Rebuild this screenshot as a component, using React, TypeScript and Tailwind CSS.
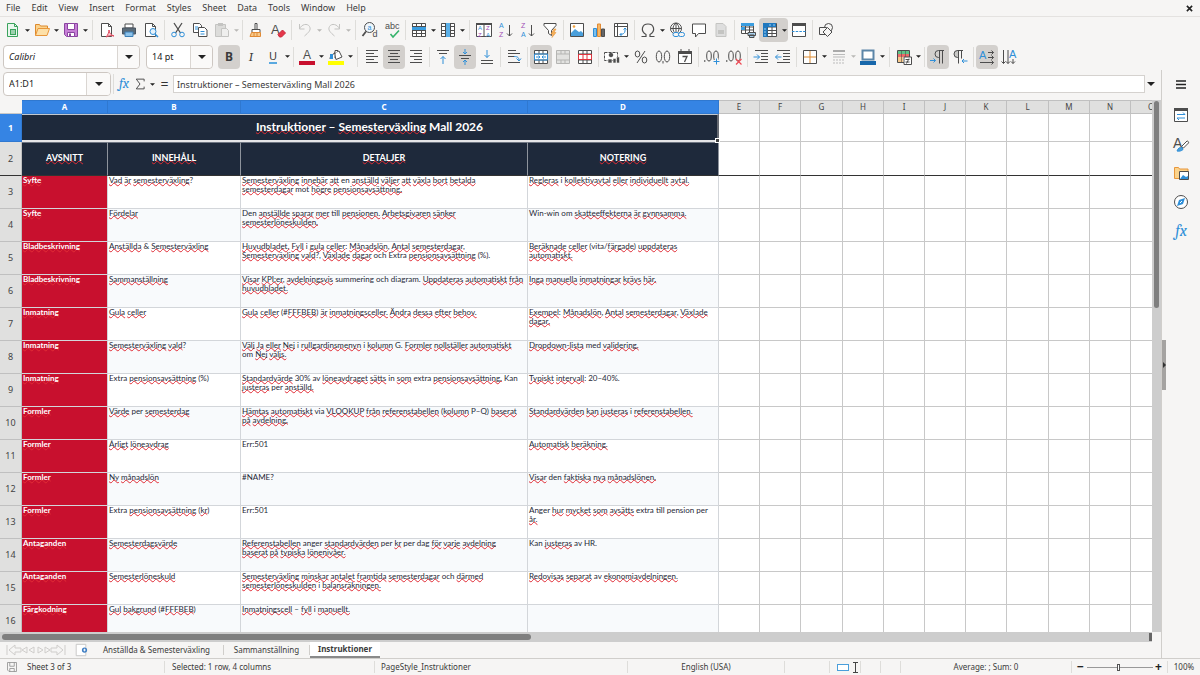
import React, { type ReactNode } from 'react'
import clsx from 'clsx'

// Shared stroke colours of the icon set
const G = '#4d4d4d'
const B = '#2f8fd8'
const L = '#c4c4c2'

const t = (x: number, y: number, size: number, fill: string, s: string) => (
  <text x={x} y={y} fontSize={size} fill={fill} stroke="none" fontFamily="'Liberation Sans', sans-serif">
    {s}
  </text>
)

const icons: Record<string, ReactNode> = {
  new: (
    <>
      <path d="M2.500 1.500h7l3 3v10h-10z" fill="#e9f7ee" stroke="#3aa35c" />
      <path d="M9.500 1.500v3h3" stroke="#3aa35c" />
      <path d="M5 7h6v6H5z" fill="#3aa35c" stroke="none" />
      <path d="M6 9h4M6 11h4" stroke="#fff" />
    </>
  ),
  open: (
    <>
      <path d="M1.500 13.500v-11h4l1 1.500h7v2.500" fill="#fbd38c" stroke="#dd8a2e" />
      <path d="M1.500 13.500l2.500-7h11.500l-2.500 7z" fill="#fde0a8" stroke="#e8963a" />
    </>
  ),
  save: (
    <>
      <path d="M1.500 1.500h13v13h-11l-2-2z" fill="#c77fd6" stroke="#8a44a0" />
      <path d="M4.500 1.500h7v6h-7z" fill="#fff" stroke="#8a44a0" />
      <path d="M4.500 10.500h7v4h-7z" fill="#fff" stroke="#8a44a0" />
      <path d="M6 11.500h2v3H6z" fill="#8a44a0" stroke="none" />
    </>
  ),
  pdf: (
    <>
      <path d="M2.500 1.500h7l3 3v10h-10z" fill="#fff" />
      <path d="M9.500 1.500v3h3" />
      <path d="M7 15c2-2 3-5 3-7 0 3 2 5 5 6-3-1-6 0-8 1z" stroke="#e0455a" fill="#fbd5da" />
    </>
  ),
  print: (
    <>
      <path d="M4 2h8v4H4z" fill="#fff" />
      <path d="M1.500 6h13v6h-13z" fill="#5a6b78" stroke="#4a5560" />
      <path d="M4 10h8v4.500H4z" fill="#8cc2ea" stroke="#3c7fb5" />
    </>
  ),
  preview: (
    <>
      <path d="M2.500 1.500h7l3 3v10h-10z" fill="#fff" />
      <path d="M9.500 1.500v3h3" />
      <circle cx="10" cy="9.500" r="3" stroke={B} fill="#e6f2fb" />
      <path d="M12 12l3 3" stroke={B} strokeWidth="1.500" />
    </>
  ),
  cut: (
    <>
      <path d="M4 1l6.500 10M12 1L5.500 11" strokeWidth="1.300" />
      <circle cx="4" cy="12.500" r="2.300" stroke={B} />
      <circle cx="12" cy="12.500" r="2.300" stroke={B} />
    </>
  ),
  copy: (
    <>
      <path d="M1.500 1.500h6l2 2v7h-8z" fill="#fff" />
      <path d="M6.500 5.500h6l2.500 2.500v6.500H6.500z" fill="#fff" />
      <path d="M3 5h3M3 7h3M8.500 9.500h4M8.500 12h4" stroke={B} />
    </>
  ),
  paste: (
    <>
      <path d="M1.500 2.500h10v12h-10z" fill="#dcdcda" stroke={L} />
      <path d="M4 1h5v3H4z" fill={L} stroke="none" />
      <path d="M7.500 6.500h5l2 2v6h-7z" fill="#efefee" stroke={L} />
    </>
  ),
  brush: (
    <>
      <path d="M7 1.500h2v6H7zM4 7.500h8v3H4z" fill="#fff" />
      <path d="M3.500 10.500h9v4h-10.500z" fill="#f8c98a" stroke="#e08a35" />
      <path d="M6 11v3M9 11v3" stroke="#e08a35" />
    </>
  ),
  clear: (
    <>
      {t(1, 12, 13, G, 'A')}
      <path d="M8 12.500l4.500-4.500 3 3-4 4H9.500z" fill="#e5364a" stroke="#c9283b" />
    </>
  ),
  undo: <path d="M2.500 2v5h5M2.500 7c2-5 8-6 10-2.500s-1 6-5 9.500" stroke={L} />,
  redo: <path d="M13.500 2v5h-5M13.500 7c-2-5-8-6-10-2.500s1 6 5 9.500" stroke={L} />,
  find: (
    <>
      <circle cx="7.500" cy="5.500" r="5" fill="#eef6fc" />
      <path d="M4 9.500L.5 14" strokeWidth="1.800" />
      {t(5.500, 8, 7, B, 'a')}
      {t(10.500, 15, 9, G, 'd')}
    </>
  ),
  spell: (
    <>
      {t(1, 7, 9, G, 'abc')}
      <path d="M6.500 12l2.500 3 6-6.500" stroke="#35b36b" strokeWidth="1.600" />
    </>
  ),
  rows: (
    <>
      <path d="M1.500 1.500h13v13h-13z" fill="#fff" />
      <path d="M1.500 4.500h13M1.500 8.500h13M1.500 11.500h13M5.500 1.500v13M10.500 1.500v13" />
      <path d="M1 5h14v3H1z" fill="#3a9de0" stroke="none" />
    </>
  ),
  cols: (
    <>
      <path d="M1.500 1.500h13v13h-13z" fill="#fff" />
      <path d="M1.500 4.500h13M1.500 8.500h13M1.500 11.500h13M5.500 1.500v13M10.500 1.500v13" />
      <path d="M6 1h4v14H6z" fill="#5bb0e8" stroke="none" />
    </>
  ),
  sort: (
    <>
      <path d="M.5 1.500h15v13H.5zM8 3v12" fill="#fff" />
      <path d="M0 1h16v2H0z" fill={G} stroke="none" />
      {t(2, 8, 6, B, 'A')}
      {t(2, 15, 6, '#a04bb5', 'Z')}
      {t(10, 8, 6, '#a04bb5', 'Z')}
      {t(10, 15, 6, B, 'A')}
    </>
  ),
  az: (
    <>
      {t(1, 6, 7, B, 'A')}
      {t(1, 15, 7, '#a04bb5', 'Z')}
      <path d="M11.500 3v11M9 11.500l2.500 2.500 2.500-2.500" />
    </>
  ),
  za: (
    <>
      {t(1, 6, 7, '#a04bb5', 'Z')}
      {t(1, 15, 7, B, 'A')}
      <path d="M11.500 3v11M9 11.500l2.500 2.500 2.500-2.500" />
    </>
  ),
  filter: (
    <>
      <path d="M2 1.500h12v2l-4.500 5v5l-3-2v-3L2 3.500z" fill="#fff" />
      <path d="M12 7l-3 5h2l-1 3.500 4-5h-2l2-3.500z" fill="#f5b25c" stroke="#e8963a" strokeWidth=".6" />
    </>
  ),
  image: (
    <>
      <path d="M1.500 1.500h13v13h-13z" fill="#fff" />
      <path d="M2 14v-3l4-4 4 3 2-1 2 2v3z" fill="#4a9fdb" stroke="none" />
      <circle cx="5" cy="4.500" r="1.300" fill="#f3a23c" stroke="none" />
    </>
  ),
  chart: (
    <>
      <path d="M2.500 6.500h3v8h-3z" fill="#7cc0ee" stroke={B} />
      <path d="M6.500 2h3v12.500h-3z" fill="#f8b765" stroke="#e08a35" />
      <path d="M10.500 7h3v7.500h-3z" fill="#666" />
    </>
  ),
  pivot: (
    <>
      <path d="M1.500 1.500h13v13h-13zM1.500 4.500h13M4.500 1.500v13" fill="#fff" />
      <path d="M12 6v3c0 2-2 3.500-5 3.500M10.500 7.500L12 6l1.500 1.500M8.500 11L7 12.500 8.500 14" stroke={B} />
    </>
  ),
  omega: <path d="M1.500 14.500h4.500v-2C0 9 2 2 8 2s8 7 2 10.500v2h4.500" strokeWidth="1.200" />,
  link: (
    <>
      <circle cx="7" cy="6.500" r="5.500" fill="#fff" />
      <path d="M7 1v11M1.500 6.500h11M7 1c-4 3-4 8 0 11M7 1c4 3 4 8 0 11" />
      <rect x="4" y="10.500" width="6" height="4" rx="2" fill="#f6f5f4" stroke={B} />
      <rect x="9.500" y="10.500" width="6" height="4" rx="2" fill="#f6f5f4" stroke={B} />
    </>
  ),
  comment: <path d="M1.500 2h13v9.500H7.500L4.500 15v-3.500h-3z" fill="#fff" />,
  page: (
    <>
      <path d="M3 1.500h7l3 3v10H3z" fill="#dedede" stroke={L} />
      <path d="M5 8h6v4H5z" fill={L} stroke="none" />
    </>
  ),
  printArea: (
    <>
      <path d="M1.500 1.500h12v10h-12zM1.500 5h12M1.500 8h12M5.500 1.500v10M9.500 1.500v10" fill="#fff" />
      <path d="M1 1h13v3H1zM1 5h4v3H1z" fill="#3a9de0" stroke="none" />
      <path d="M8 10.500h7.500v3H8zM9.500 13h4.500v2.500H9.500z" fill="#a8cfec" />
    </>
  ),
  freeze: (
    <>
      <path d="M1.500 1.500h13v13h-13zM5.500 1.500v13M10 5v10M1.500 5h13M5 8.500h10M5 11.500h10" fill="#fff" />
      <path d="M1 1h13v4H5.500v10H1z" fill="#1f78bf" stroke="none" />
      <path d="M2 7h2M2 10h2M2 13h2M7 3h2M11 3h2" stroke="#9fd0f2" />
    </>
  ),
  split: (
    <>
      <path d="M1.500 1.500h13v13h-13z" fill="#fff" />
      <path d="M1 1h14v3H1z" fill={G} stroke="none" />
      <path d="M1 9.500h14" stroke={B} strokeDasharray="2.500 1.200" />
    </>
  ),
  shapes: (
    <>
      <circle cx="10.500" cy="5.500" r="4" />
      <path d="M1.500 5.500h7v7h-7z" fill="#f6f5f4" />
      <path d="M9.500 5.500l4.500 4.500-4.500 4.500L5 10z" fill="#f6f5f4" />
    </>
  ),
  fontColor: (
    <>
      {t(4, 10, 12, G, 'A')}
      <path d="M0 12h16v4H0z" fill="#c8102e" stroke="none" />
    </>
  ),
  fill: (
    <>
      <path d="M6 4l5-2 3 6-6 2.500z" fill="#fff" />
      <path d="M7 5V1.500h3M2 10c0-3 2-5 5-5.500L7 9" fill="#fff" />
      <path d="M2 5h3v5H2z" fill={B} stroke="none" />
      <path d="M0 12h16v4H0z" fill="#ffff00" stroke="none" />
    </>
  ),
  left: <path d="M2 1.500h12M2 4.500h8M2 7.500h12M2 10.500h8M2 13.500h12" />,
  center: <path d="M2 1.500h12M4 4.500h8M2 7.500h12M4 10.500h8M2 13.500h12" />,
  right: <path d="M2 1.500h12M6 4.500h8M2 7.500h12M6 10.500h8M2 13.500h12" />,
  top: (
    <>
      <path d="M2 1.500h12M4 4.500h8" />
      <path d="M8 15V7.500M5.500 10L8 7.500l2.500 2.500" stroke={B} />
    </>
  ),
  middle: (
    <>
      <path d="M2 6.500h12M4 9.500h8" />
      <path d="M8 0v5M6 3l2 2 2-2M8 16v-5M6 13l2-2 2 2" stroke={B} />
    </>
  ),
  bottom: (
    <>
      <path d="M2 11.500h12M2 14.500h12" />
      <path d="M8 1v7.500M5.500 6L8 8.500 10.500 6" stroke={B} />
    </>
  ),
  wrap: (
    <>
      <path d="M2 1.500h8M2 4.500h12M2 7.500h6M2 13.500h12" />
      <path d="M8 7.500c4 0 5 1 5 4.500M10.500 9.500L13 12l2-2.500" stroke={B} />
    </>
  ),
  mergeCenter: (
    <>
      <path d="M1.500 1.500h13v13h-13zM1.500 5h13M1.500 11h13M6 1.500V5M10 1.500V5M6 11v3.500M10 11v3.500" fill="#fff" />
      <path d="M1.500 5h13v6h-13zM3 8h4M13 8H9M5.500 6.500L7 8 5.500 9.500M10.500 6.500L9 8l1.500 1.500" stroke={B} />
    </>
  ),
  merge: (
    <path
      d="M1.500 1.500h13v13h-13zM1.500 5h13M1.500 11h13M6 1.500V5M10 1.500V5M6 11v3.500M10 11v3.500"
      fill="#e2e2e0"
      stroke="#b5b5b3"
    />
  ),
  unmerge: (
    <>
      <path d="M1.500 1.500h13v13h-13zM1.500 5h13M1.500 11h13M6 1.500V5M10 1.500V5M6 11v3.500M10 11v3.500" fill="#fff" />
      <path d="M1.500 5.500h13v5h-13zM6 5.500v5M10 5.500v5" stroke="#e0343f" />
    </>
  ),
  currency: (
    <>
      <path d="M.5 3.500h13v8H.5z" fill="#fff" strokeDasharray="3 1" />
      <circle cx="7" cy="6" r="1.800" fill={G} />
      <path d="M4 10h4v4H4zM9 9.500h3v4.500H9zM12.500 8h3v6h-3z" fill={G} stroke="#f6f5f4" strokeWidth=".6" />
    </>
  ),
  percent: (
    <>
      <ellipse cx="4.500" cy="5" rx="2.300" ry="3" />
      <ellipse cx="11.500" cy="11" rx="2.300" ry="3" />
      <path d="M12 2L4 14" />
    </>
  ),
  number: (
    <>
      <ellipse cx="4" cy="7.500" rx="2.700" ry="5.500" />
      <ellipse cx="12" cy="7.500" rx="2.700" ry="5.500" />
      <path d="M8 12v2.500" />
    </>
  ),
  date: (
    <>
      <path d="M1.500 2.500h13v12h-13z" fill="#fff" />
      <path d="M1.500 2.500h13v2h-13zM4 0v3M12 0v3" fill={G} />
      <path d="M5.500 7.500H10L7.500 13" strokeWidth="1.300" />
    </>
  ),
  addDecimal: (
    <>
      <ellipse cx="5" cy="7" rx="2.300" ry="5" />
      <ellipse cx="12" cy="7" rx="2.300" ry="5" />
      <path d="M.8 11v2" />
      <path d="M12.500 9v7M9 12.500h7" stroke="#f6f5f4" strokeWidth="3" />
      <path d="M12.500 9.500v6M9.500 12.500h6" stroke={B} />
    </>
  ),
  delDecimal: (
    <>
      <ellipse cx="5" cy="7" rx="2.300" ry="5" />
      <ellipse cx="12" cy="7" rx="2.300" ry="5" />
      <path d="M.8 11v2" />
      <path d="M10 10l5.500 5.500M15.500 10L10 15.500" stroke="#ee4a55" strokeWidth="1.200" />
    </>
  ),
  indent: (
    <>
      <path d="M2 1.500h13M8 4.500h7M8 7.500h7M8 10.500h7M2 13.500h13" />
      <path d="M.5 8h6M4 5.500L6.500 8 4 10.500" stroke={B} />
    </>
  ),
  outdent: (
    <>
      <path d="M2 1.500h13M8 4.500h7M8 7.500h7M8 10.500h7M2 13.500h13" />
      <path d="M6.500 8h-6M3 5.500L.5 8 3 10.500" stroke={B} />
    </>
  ),
  borders: (
    <>
      <path d="M1.500 1.500h13v13h-13z" fill="#fff" />
      <path d="M8 2v12M2 8h12" stroke="#dd8a2e" />
    </>
  ),
  lineStyle: (
    <>
      <path d="M2 2h12" stroke="#aaa" strokeWidth="2" />
      <path d="M2 5.500h12M2 8h12" stroke="#bbb" />
      <path d="M2 11h12M2 14h12" stroke="#bbb" strokeDasharray="2 1" />
    </>
  ),
  lineColor: (
    <>
      <path d="M2.500 1.500h11v9h-11z" fill="#fff" stroke="#5c86a8" strokeWidth="2" />
      <path d="M0 12h16v4H0z" fill="#1767ab" stroke="none" />
    </>
  ),
  conditional: (
    <>
      <path d="M1.500 1.500h12v12h-12z" fill="#fff" />
      <path d="M2 2h11v3H2z" fill="#5fc487" stroke="none" />
      <path d="M2 5h11v3H2z" fill="#ee6a6a" stroke="none" />
      <path d="M2 8h5v5H2z" fill="#f8c98a" stroke="none" />
      <path d="M5.500 1.500v12M9.500 1.500V8" strokeWidth=".6" />
      <path d="M8 8h7.500v7.500H8zM9.500 10.500h4M9.500 13h4M13 9.500l-2.500 5" fill="#fff" />
    </>
  ),
  ltr: (
    <>
      <path d="M14 1.500H8.500a3.500 3.500 0 000 7h1M9.500 1.500v13M12.500 1.500v13" />
      <path d="M0 11.500h5.500M3.500 9.500l2 2-2 2" stroke={B} />
    </>
  ),
  rtl: (
    <>
      <path d="M6.500 1.500h-1a3.500 3.500 0 000 7h1z" fill="#c9c9c7" />
      <path d="M11 1.500H5.500M6.500 1.500v13M9.500 1.500v8" />
      <path d="M15.500 12H10M12 10l-2 2 2 2" stroke={B} />
    </>
  ),
  dirH: (
    <>
      {t(0, 10, 11, B, 'A')}
      <path d="M9 3.500h5.500M9 8.500h5.500M1 13.500h13.500M12.500 1.500l2 2-2 2M12.500 6.500l2 2-2 2M12.500 11.500l2 2-2 2" />
    </>
  ),
  dirV: (
    <>
      {t(8, 9, 11, B, 'A')}
      <path d="M2.500 1v13.500M7 1v13.500M12 10v4.500M.5 12.500l2 2 2-2M5 12.500l2 2 2-2M10 12.500l2 2 2-2" />
    </>
  ),
  sum: <path d="M13.500 4.500v-3H3l5 6.500-5 6.500h10.500v-3" strokeWidth="1.300" />,
  properties: (
    <>
      <path d="M1.500 1.500h13v13h-13z" fill="#fff" />
      <path d="M1 1h14v3H1z" fill={G} stroke="none" />
      <path d="M4 7.500h8M10 5.500l2 2M4 11h8M4 11l2 2" stroke={B} />
    </>
  ),
  styles: (
    <>
      {t(0, 12, 14, G, 'A')}
      <path d="M8.500 10.500l5.500-5.500c1 0 2 1 1.500 2l-5 5z" fill="#fff" />
      <path d="M4 15c1-3 3-4 5-3.500l1 2C8.500 15 6 15.500 4 15z" fill="#4a9fdb" stroke={B} />
    </>
  ),
  gallery: (
    <>
      <path d="M1.500 13.500v-11h4l1 1.500h8.500v9.500z" fill="#fbd38c" stroke="#e8963a" />
      <path d="M6.500 6.500h9v8h-9z" fill="#fff" />
      <path d="M7 14l3-4 3 2 2-1v3z" fill={B} stroke="none" />
    </>
  ),
  navigator: (
    <>
      <circle cx="8" cy="8" r="6.500" fill="#fff" />
      <path d="M12 4l-2 6-6 2 2-6z" fill={B} stroke="none" />
      <path d="M9 7L7 9" stroke="#fff" />
    </>
  ),
  disk: <path d="M2 2h12v12H4l-2-2zM5 2v5h6V2M5 14v-4h6v4" stroke="#888" />,
  addSheet: (
    <>
      <path d="M2.500 1.500h11v13h-11z" fill="#fff" stroke={L} />
      <circle cx="12" cy="8" r="3" fill="#3f7fc4" stroke="none" />
      <path d="M12 6.500v3M10.500 8h3" stroke="#fff" />
    </>
  ),
}

function Icon({ name, className = 'size-4' }: { name: string; className?: string }) {
  return (
    <svg viewBox="0 0 16 16" fill="none" stroke={G} className={clsx('shrink-0 overflow-visible', className)} aria-hidden="true">
      {icons[name]}
    </svg>
  )
}

function Caret({ disabled = false, large = false }: { disabled?: boolean; large?: boolean }) {
  return (
    <svg
      viewBox="0 0 8 4"
      aria-hidden="true"
      className={clsx('shrink-0', large ? 'h-1 w-2' : 'h-[3px] w-[5px]', disabled ? 'fill-[#b9b8b6]' : 'fill-[#222]')}
    >
      <path d="M0 0h8L4 4z" />
    </svg>
  )
}

interface ToolProps {
  name: string
  label: string
  menu?: boolean
  active?: boolean
  disabled?: boolean
  children?: ReactNode
}

function Tool({ name, label, menu, active, disabled, children }: ToolProps) {
  return (
    <div className={clsx('flex shrink-0 rounded-sm', active && 'bg-[#d3d0cd]')}>
      <button aria-label={label} disabled={disabled} className="flex h-6 w-[22px] items-center justify-center">
        {children ?? <Icon name={name} />}
      </button>
      {menu && (
        <button aria-label={`${label} options`} disabled={disabled} className="flex h-6 w-[7px] items-center justify-center">
          <Caret disabled={disabled} />
        </button>
      )}
    </div>
  )
}

function Sep({ wide = false }: { wide?: boolean }) {
  return (
    <div className={clsx('flex h-6 shrink-0 items-center justify-center', wide ? 'w-[7px]' : 'w-[5px]')}>
      <div className="h-5 w-px bg-[#deddda]" />
    </div>
  )
}

function Combo({ label, value, className }: { label: string; value: string; className: string }) {
  return (
    <div className={clsx('relative h-6 shrink-0', className)}>
      <select
        aria-label={label}
        defaultValue={value}
        className={clsx(
          'size-full appearance-none rounded-sm border border-[#cdc7c2] bg-white pl-[5px] text-[9px] text-[#222]',
          label === 'Font name' && 'italic',
        )}
      >
        <option>{value}</option>
      </select>
      <span className="pointer-events-none absolute inset-y-px right-px flex w-[22px] items-center justify-center rounded-r-sm border-l border-[#dad6d2] bg-[#faf9f8]">
        <Caret large />
      </span>
    </div>
  )
}

const menus = ['File', 'Edit', 'View', 'Insert', 'Format', 'Styles', 'Sheet', 'Data', 'Tools', 'Window', 'Help']

function MenuBar() {
  return (
    <nav className="flex h-[17px] shrink-0 items-center justify-between border-b border-[#e4e2e0] pr-[7px] pl-[6px]">
      <div className="flex gap-[11px]">
        {menus.map((m) => (
          <button key={m}>{m}</button>
        ))}
      </div>
      <button aria-label="Close document">
        <svg viewBox="0 0 8 8" className="size-[7px]" stroke="#222" strokeWidth="1.800" aria-hidden="true">
          <path d="M1 1l6 6M7 1L1 7" />
        </svg>
      </button>
    </nav>
  )
}

function StandardBar() {
  return (
    <div role="toolbar" aria-label="Standard" className="flex h-[26px] shrink-0 items-center pl-[2px]">
      <Tool name="new" label="New" menu />
      <Tool name="open" label="Open" menu />
      <Tool name="save" label="Save" menu />
      <Sep wide />
      <Tool name="pdf" label="Export as PDF" />
      <Tool name="print" label="Print" />
      <Tool name="preview" label="Print preview" />
      <Sep />
      <Tool name="cut" label="Cut" />
      <Tool name="copy" label="Copy" />
      <Tool name="paste" label="Paste" menu disabled />
      <Sep />
      <Tool name="brush" label="Clone formatting" />
      <Tool name="clear" label="Clear formatting" />
      <Sep />
      <Tool name="undo" label="Undo" menu disabled />
      <Tool name="redo" label="Redo" menu disabled />
      <Sep wide />
      <Tool name="find" label="Find and replace" />
      <Tool name="spell" label="Spelling" />
      <Sep />
      <Tool name="rows" label="Row" menu />
      <Tool name="cols" label="Column" menu />
      <Sep wide />
      <Tool name="sort" label="Sort" />
      <Tool name="az" label="Sort ascending" />
      <Tool name="za" label="Sort descending" />
      <Tool name="filter" label="AutoFilter" />
      <Sep />
      <Tool name="image" label="Insert image" />
      <Tool name="chart" label="Insert chart" />
      <Tool name="pivot" label="Insert pivot table" />
      <Sep />
      <Tool name="omega" label="Special character" menu />
      <Tool name="link" label="Insert hyperlink" />
      <Tool name="comment" label="Insert comment" />
      <Tool name="page" label="Headers and footers" disabled />
      <Sep />
      <Tool name="printArea" label="Define print area" />
      <Tool name="freeze" label="Freeze rows and columns" menu active />
      <Tool name="split" label="Split window" />
      <Sep />
      <Tool name="shapes" label="Show draw functions" />
    </div>
  )
}

function FormattingBar() {
  return (
    <div role="toolbar" aria-label="Formatting" className="flex h-[27px] shrink-0 items-center pl-[3px]">
      <Combo label="Font name" value="Calibri" className="mr-1.5 w-[137px]" />
      <Combo label="Font size" value="14 pt" className="mr-[5px] w-[67px]" />
      <Tool name="bold" label="Bold" active>
        <span className="text-[12px] font-bold">B</span>
      </Tool>
      <Tool name="italic" label="Italic">
        <span className="font-serif text-[13px] italic">I</span>
      </Tool>
      <Tool name="underline" label="Underline" menu>
        <span className="border-b-2 border-[#5aa9e0] text-[11px] leading-[12px]">U</span>
      </Tool>
      <Sep />
      <Tool name="fontColor" label="Font colour" menu />
      <Tool name="fill" label="Background colour" menu />
      <Sep wide />
      <Tool name="left" label="Align left" />
      <Tool name="center" label="Align centre" active />
      <Tool name="right" label="Align right" />
      <Sep />
      <Tool name="top" label="Align top" />
      <Tool name="middle" label="Centre vertically" active />
      <Tool name="bottom" label="Align bottom" />
      <Sep />
      <Tool name="wrap" label="Wrap text" />
      <Sep />
      <Tool name="mergeCenter" label="Merge and centre" active />
      <Tool name="merge" label="Merge cells" disabled />
      <Tool name="unmerge" label="Unmerge cells" />
      <Sep />
      <Tool name="currency" label="Format as currency" menu />
      <Tool name="percent" label="Format as percent" />
      <Tool name="number" label="Format as number" />
      <Tool name="date" label="Format as date" />
      <Sep />
      <Tool name="addDecimal" label="Add decimal place" />
      <Tool name="delDecimal" label="Delete decimal place" />
      <Sep />
      <Tool name="indent" label="Increase indent" />
      <Tool name="outdent" label="Decrease indent" />
      <Sep />
      <Tool name="borders" label="Borders" menu />
      <Tool name="lineStyle" label="Border style" menu disabled />
      <Tool name="lineColor" label="Border colour" menu />
      <Sep wide />
      <Tool name="conditional" label="Conditional formatting" menu />
      <Sep />
      <Tool name="ltr" label="Left to right" active />
      <Tool name="rtl" label="Right to left" />
      <Sep />
      <Tool name="dirH" label="Horizontal text" active />
      <Tool name="dirV" label="Vertical text" />
    </div>
  )
}

function FormulaBar() {
  return (
    <div className="flex h-[30px] shrink-0 items-center pr-1 pb-0.5 pl-[3px]">
      <div className="flex h-6 w-[108px] shrink-0 overflow-hidden rounded-sm border border-[#cdc7c2] bg-white">
        <input aria-label="Name box" defaultValue="A1:D1" className="min-w-0 flex-1 pl-[5px] text-[9px] text-[#222]" />
        <button aria-label="Manage names" className="flex w-6 items-center justify-center border-l border-[#dad6d2] bg-[#faf9f8]">
          <Caret large />
        </button>
      </div>
      <div className="ml-0.5 flex items-center border-l border-[#deddda] pl-0.5">
        <button aria-label="Function wizard" className="w-4 font-serif text-[14px] leading-4 text-[#2f8fd8] italic">
          fx
        </button>
        <button aria-label="Select function" className="flex h-5 w-4 items-center justify-center">
          <Icon name="sum" className="size-3" />
        </button>
        <span className="flex w-2 justify-center">
          <Caret />
        </span>
        <button aria-label="Formula" className="w-[17px] text-[14px] leading-4 text-[#333]">
          =
        </button>
      </div>
      <input
        aria-label="Input line"
        defaultValue="Instruktioner – Semesterväxling Mall 2026"
        className="h-[18px] min-w-0 flex-1 border border-[#d5d2cf] bg-white pl-[3px] text-[9px] text-[#3a3a3a]"
      />
      <button aria-label="Expand formula bar" className="flex h-5 w-3 items-center justify-center">
        <Caret large />
      </button>
    </div>
  )
}

// Words the spelling dictionary accepts; everything else gets the red wave.
const knownWords = new Set(
  'mot en till i och Den den summering diagram med om G Kan in extra Extra av per P Q via HR anger Anger pension dag vita Win-win Mall Err NAME'.split(
    ' ',
  ),
)

function Spelled({ text }: { text: string }) {
  const tokens = text.match(/\p{L}+(?:[:-]\p{L}+)*\.?|[^\p{L}]+/gu) ?? []
  return (
    <>
      {tokens.map((token, i) => {
        const ok = !/^\p{L}/u.test(token) || knownWords.has(token.replace('.', ''))
        return ok ? (
          token
        ) : (
          <span
            key={i}
            className="underline decoration-[#e02b35] decoration-wavy decoration-1 underline-offset-[-1px] [text-decoration-skip-ink:none]"
          >
            {token}
          </span>
        )
      })}
    </>
  )
}

const columns = [
  { id: 'A', width: 'w-[86px]' },
  { id: 'B', width: 'w-[133px]' },
  { id: 'C', width: 'w-[287px]' },
  { id: 'D', width: 'w-[191px]' },
  { id: 'E', width: 'w-[41px]' },
  { id: 'F', width: 'w-[41px]' },
  { id: 'G', width: 'w-[42px]' },
  { id: 'H', width: 'w-[41px]' },
  { id: 'I', width: 'w-[41px]' },
  { id: 'J', width: 'w-[41px]' },
  { id: 'K', width: 'w-[41px]' },
  { id: 'L', width: 'w-[42px]' },
  { id: 'M', width: 'w-[41px]' },
  { id: 'N', width: 'w-[41px]' },
  { id: 'O', width: 'w-[41px]' },
]
const emptyColumns = columns.slice(4)

const headings = ['AVSNITT', 'INNEHÅLL', 'DETALJER', 'NOTERING']

const rows = [
  ['Syfte', 'Vad är semesterväxling?', 'Semesterväxling innebär att en anställd väljer att växla bort betalda\nsemesterdagar mot högre pensionsavsättning.', 'Regleras i kollektivavtal eller individuellt avtal.'],
  ['Syfte', 'Fördelar', 'Den anställde sparar mer till pensionen. Arbetsgivaren sänker\nsemesterlöneskulden.', 'Win-win om skatteeffekterna är gynnsamma.'],
  ['Bladbeskrivning', 'Anställda & Semesterväxling', 'Huvudbladet. Fyll i gula celler: Månadslön, Antal semesterdagar,\nSemesterväxling vald?, Växlade dagar och Extra pensionsavsättning (%).', 'Beräknade celler (vita/färgade) uppdateras\nautomatiskt.'],
  ['Bladbeskrivning', 'Sammanställning', 'Visar KPI:er, avdelningsvis summering och diagram. Uppdateras automatiskt från\nhuvudbladet.', 'Inga manuella inmatningar krävs här.'],
  ['Inmatning', 'Gula celler', 'Gula celler (#FFFBEB) är inmatningsceller. Ändra dessa efter behov.', 'Exempel: Månadslön, Antal semesterdagar, Växlade\ndagar.'],
  ['Inmatning', 'Semesterväxling vald?', 'Välj Ja eller Nej i rullgardinsmenyn i kolumn G. Formler nollställer automatiskt\nom Nej väljs.', 'Dropdown-lista med validering.'],
  ['Inmatning', 'Extra pensionsavsättning (%)', 'Standardvärde 30% av löneavdraget sätts in som extra pensionsavsättning. Kan\njusteras per anställd.', 'Typiskt intervall: 20–40%.'],
  ['Formler', 'Värde per semesterdag', 'Hämtas automatiskt via VLOOKUP från referenstabellen (kolumn P–Q) baserat\npå avdelning.', 'Standardvärden kan justeras i referenstabellen.'],
  ['Formler', 'Årligt löneavdrag', 'Err:501', 'Automatisk beräkning.'],
  ['Formler', 'Ny månadslön', '#NAME?', 'Visar den faktiska nya månadslönen.'],
  ['Formler', 'Extra pensionsavsättning (kr)', 'Err:501', 'Anger hur mycket som avsätts extra till pension per\når.'],
  ['Antaganden', 'Semesterdagsvärde', 'Referenstabellen anger standardvärden per kr per dag för varje avdelning\nbaserat på typiska lönenivåer.', 'Kan justeras av HR.'],
  ['Antaganden', 'Semesterlöneskuld', 'Semesterväxling minskar antalet framtida semesterdagar och därmed\nsemesterlöneskulden i balansräkningen.', 'Redovisas separat av ekonomiavdelningen.'],
  ['Färgkodning', 'Gul bakgrund (#FFFBEB)', 'Inmatningscell – fyll i manuellt.', ''],
]

function Sheet() {
  return (
    <div className="min-h-0 min-w-0 flex-1 overflow-hidden bg-white">
      <table className="w-[1172px] table-fixed border-separate border-spacing-0">
        <colgroup>
          <col className="w-[22px]" />
          {columns.map((c) => (
            <col key={c.id} className={c.width} />
          ))}
        </colgroup>
        <thead>
          <tr className="h-3.5 text-[8px] leading-[12px]">
            <td className="border-b border-[#c8c8c8] bg-[#f6f5f4]" />
            {columns.map((c, i) => (
              <th
                key={c.id}
                scope="col"
                className={clsx(
                  'border-t border-r border-b',
                  i < 4
                    ? 'border-[#2f78d0] bg-[#3584e4] font-bold text-white'
                    : 'border-[#c0c0c0] bg-[#e0e0df] font-normal text-[#444]',
                )}
              >
                {c.id}
              </th>
            ))}
          </tr>
        </thead>
        <tbody className="font-['Lato',sans-serif] text-[#1f2937]">
          <tr className="h-7">
            <RowNumber n={1} active />
            <td
              colSpan={4}
              className="relative border-t border-r-2 border-b-2 border-t-[#c3c8cf] border-r-[#666a72] border-b-[#e6e6e8] bg-[#1e293b] pb-0.5 text-center text-[12px] leading-[12px] font-bold text-white"
            >
              <Spelled text="Instruktioner – Semesterväxling Mall 2026" />
              <span className="absolute -right-[3px] -bottom-[3px] size-[5px] border border-white bg-[#444]" />
            </td>
            {emptyColumns.map((c) => (
              <td key={c.id} className="border-r border-b border-[#c8c8c8]" />
            ))}
          </tr>
          <tr className="h-[34px]">
            <RowNumber n={2} frozen />
            {headings.map((h) => (
              <th
                key={h}
                scope="col"
                className="border-t border-r border-b border-t-[#6f7683] border-r-[#8e939c] border-b-[#333] bg-[#1e293b] pb-0.5 text-[9px] leading-[12px] font-bold text-white"
              >
                <Spelled text={h} />
              </th>
            ))}
            {emptyColumns.map((c) => (
              <td key={c.id} className="border-r border-b border-r-[#c8c8c8] border-b-[#333]" />
            ))}
          </tr>
          {rows.map((cells, r) => (
            <tr key={r} className="h-[33px] text-[8px] leading-[9px]">
              <RowNumber n={r + 3} />
              {cells.map((text, i) => (
                <td
                  key={i}
                  className={clsx(
                    'overflow-hidden border-r border-b border-[#d3d6da] pl-px align-top whitespace-pre',
                    i === 0 ? 'bg-[#c8102e] font-bold text-white' : r % 2 === 1 && 'bg-[#f8fafc]',
                  )}
                >
                  <Spelled text={text} />
                </td>
              ))}
              {emptyColumns.map((c) => (
                <td key={c.id} className="border-r border-b border-[#c8c8c8]" />
              ))}
            </tr>
          ))}
        </tbody>
      </table>
    </div>
  )
}

function RowNumber({ n, active = false, frozen = false }: { n: number; active?: boolean; frozen?: boolean }) {
  return (
    <th
      scope="row"
      className={clsx(
        "border-r border-b font-['Noto_Sans',sans-serif] text-[9px] leading-[12px]",
        active ? 'border-[#2f78d0] bg-[#3584e4] font-bold text-white' : 'bg-[#e0e0df] font-normal text-[#444]',
        !active && (frozen ? 'border-r-[#c0c0c0] border-b-[#333]' : 'border-[#c0c0c0]'),
      )}
    >
      {n}
    </th>
  )
}

function SheetTabs() {
  return (
    <div className="flex h-4 shrink-0 items-center pl-1.5">
      <svg viewBox="0 0 60 12" className="h-3 w-[60px]" fill="none" stroke="#cfcdcb" aria-hidden="true">
        <path d="M1 1v10M9 1L3 6l6 5V8h6V4H9zM21 3l-5 3 5 3zM28 3l-5 3 5 3zM32 3l5 3-5 3zM39 3l5 3-5 3zM51 1l6 5-6 5V8h-6V4h6zM59 1v10" />
      </svg>
      <button aria-label="Add sheet" className="ml-2 flex size-4 items-center">
        <Icon name="addSheet" className="size-3.5" />
      </button>
      <div role="tablist" className="flex h-full items-center text-[8px]">
        <button role="tab" aria-selected="false" className="w-[133px] text-center">
          Anställda & Semesterväxling
        </button>
        <button role="tab" aria-selected="false" className="w-[87px] border-x border-[#d0cecb] text-center leading-[10px]">
          Sammanställning
        </button>
        <button role="tab" aria-selected="true" className="h-full w-[70px] border-b-2 border-[#8a8a8a] bg-white text-center font-bold">
          Instruktioner
        </button>
      </div>
    </div>
  )
}

function Sidebar() {
  const decks = [
    { name: 'properties', label: 'Properties' },
    { name: 'styles', label: 'Styles' },
    { name: 'gallery', label: 'Gallery' },
    { name: 'navigator', label: 'Navigator' },
  ]
  return (
    <aside className="relative flex w-[39px] shrink-0 flex-col items-center border-l border-[#d0cecb] pt-0.5">
      <button aria-label="Sidebar settings" className="mb-1 flex h-6 w-6 items-center justify-center">
        <svg viewBox="0 0 10 9" className="h-[9px] w-[10px]" stroke="#222" strokeWidth="1.500" aria-hidden="true">
          <path d="M0 1h10M0 4.500h10M0 8h10" />
        </svg>
      </button>
      {decks.map((d) => (
        <button key={d.name} aria-label={d.label} className="flex h-[29px] w-6 items-center justify-center">
          <Icon name={d.name} className="size-4" />
        </button>
      ))}
      <button aria-label="Functions" className="flex h-[29px] w-6 items-center justify-center font-serif text-[16px] text-[#2f8fd8] italic">
        fx
      </button>
      <button aria-label="Hide sidebar" className="absolute top-[46%] left-0 flex h-[50px] w-1 items-center justify-center bg-[#a5a3a1]">
        <svg viewBox="0 0 3 6" className="h-1.5 w-[3px]" aria-hidden="true">
          <path d="M0 0l3 3-3 3z" fill="#333" />
        </svg>
      </button>
    </aside>
  )
}

function StatusBar() {
  return (
    <footer className="flex h-[17px] shrink-0 items-center border-t border-[#d0cecb] text-[8px] leading-[12px] [&>*]:shrink-0">
      <span className="flex w-5 justify-end pr-0.5">
        <Icon name="disk" className="size-3" />
      </span>
      <span className="w-[145px] border-r border-[#deddda] pl-[7px]">Sheet 3 of 3</span>
      <span className="w-[210px] border-r border-[#deddda] pl-[7px]">Selected: 1 row, 4 columns</span>
      <span className="w-[253px] border-r border-[#deddda] pl-1.5">PageStyle_Instruktioner</span>
      <span className="w-[157px] border-r border-[#deddda] text-center">English (USA)</span>
      <span className="h-3 w-[45px] border-r border-[#deddda]" />
      <span className="flex h-3 w-[31px] items-center gap-1 border-r border-[#deddda] pl-[7px]">
        <span className="h-[7px] w-3 border border-[#4a9fdb] bg-white" />
        <svg viewBox="0 0 5 11" className="h-[11px] w-[5px]" stroke="#444" fill="none" aria-hidden="true">
          <path d="M0 .5h5M0 10.500h5M2.500 0v11" />
        </svg>
      </span>
      <span className="h-3 w-5 border-r border-[#deddda]" />
      <span className="h-3 w-5 border-r border-[#deddda]" />
      <span className="min-w-[120px] flex-1 border-r border-[#deddda] text-center">Average: ; Sum: 0</span>
      <div className="flex h-3 w-[96px] items-center justify-between border-r border-[#deddda] px-[5px]">
        <button aria-label="Zoom out" className="text-[12px] font-bold text-[#222]">
          −
        </button>
        <input
          type="range"
          aria-label="Zoom"
          min={0}
          max={100}
          defaultValue={48}
          className="h-2 w-[66px] appearance-none bg-transparent [&::-webkit-slider-runnable-track]:h-px [&::-webkit-slider-runnable-track]:bg-[#999] [&::-webkit-slider-thumb]:-mt-[3px] [&::-webkit-slider-thumb]:h-[7px] [&::-webkit-slider-thumb]:w-[3px] [&::-webkit-slider-thumb]:appearance-none [&::-webkit-slider-thumb]:border [&::-webkit-slider-thumb]:border-[#555] [&::-webkit-slider-thumb]:bg-white"
        />
        <button aria-label="Zoom in" className="text-[12px] font-bold text-[#222]">
          +
        </button>
      </div>
      <span className="w-8 text-center">100%</span>
    </footer>
  )
}

export default function App() {
  return (
    <div className="flex h-screen flex-col overflow-hidden bg-[#f6f5f4] font-['Noto_Sans',sans-serif] text-[9px] leading-[14px] text-[#3a3a3a]">
      <MenuBar />
      <StandardBar />
      <FormattingBar />
      <div className="flex min-h-0 flex-1">
        <main className="flex min-w-0 flex-1 flex-col">
          <FormulaBar />
          <div className="flex min-h-0 flex-1">
            <Sheet />
            <div className="w-[9px] shrink-0 bg-[#cdcdcd] px-0.5 pt-px">
              <div className="h-[39%] rounded-full bg-[#7f7f7f]" />
            </div>
          </div>
          <div className="mr-[9px] flex h-2.5 shrink-0 items-center justify-between bg-[#cdcdcd] pl-0.5">
            <div className="h-1.5 w-[46%] rounded-full bg-[#7f7f7f]" />
            <div className="h-2 w-[3px] bg-[#666]" />
          </div>
          <SheetTabs />
        </main>
        <Sidebar />
      </div>
      <StatusBar />
    </div>
  )
}
